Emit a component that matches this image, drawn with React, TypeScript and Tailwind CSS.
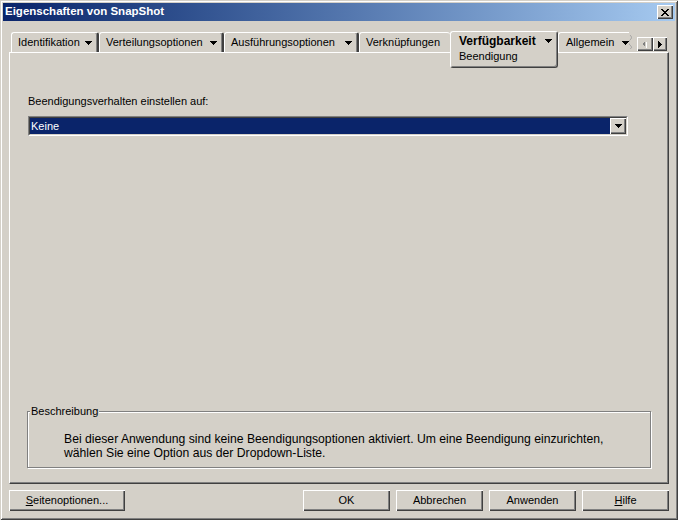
import React from "react";

const raised =
  "shadow-[inset_1px_1px_0_#ffffff,inset_-1px_-1px_0_#404040,inset_-2px_-2px_0_#808080]";

function Caret() {
  return (
    <svg width="7" height="4" viewBox="0 0 7 4" shapeRendering="crispEdges" className="shrink-0">
      <path d="M0 0h7v1h-1v1h-1v1h-1v1h-1v-1h-1v-1h-1v-1h-1z" fill="#000" />
    </svg>
  );
}

const tabs = [
  { label: "Identifikation", width: "w-[88px]", edge: true },
  { label: "Verteilungsoptionen", width: "w-[125px]", edge: true },
  { label: "Ausführungsoptionen", width: "w-[135px]", edge: true },
  { label: "Verknüpfungen", width: "w-[91px]", edge: false, noArrow: true },
];

function Tab({ label, width, edge, noArrow }: { label: string; width: string; edge: boolean; noArrow?: boolean }) {
  return (
    <div
      className={`${width} h-[20px] shrink-0 flex items-center pl-[6px] pr-[5px] border-l border-t border-white rounded-t-[3px] ${
        edge ? "border-r-2 border-r-[#404040] shadow-[inset_-1px_0_0_#808080]" : ""
      }`}
    >
      <span className="whitespace-nowrap">{label}</span>
      {!noArrow && (
        <span className="ml-auto">
          <Caret />
        </span>
      )}
    </div>
  );
}

function Button({ children, width = "w-[87px]" }: { children: React.ReactNode; width?: string }) {
  return (
    <button className={`${width} h-[21px] flex items-center justify-center bg-[#d4d0c8] ${raised}`}>
      {children}
    </button>
  );
}

export default function App() {
  return (
    <div
      className="w-[678px] h-[520px] bg-[#d4d0c8] p-[3px] flex flex-col text-[11px] text-black font-['Liberation_Sans',Arial,sans-serif] shadow-[inset_1px_1px_0_#d4d0c8,inset_-1px_-1px_0_#404040,inset_2px_2px_0_#ffffff,inset_-2px_-2px_0_#808080] overflow-hidden select-none"
    >
      {/* Title bar */}
      <div className="h-[18px] shrink-0 flex items-center justify-between pl-[2px] pr-[2px] bg-gradient-to-r from-[#0a246a] to-[#a6caf0]">
        <span className="text-white font-bold text-[11.5px] leading-none">Eigenschaften von SnapShot</span>
        <button className={`w-[16px] h-[14px] flex items-center justify-center bg-[#d4d0c8] ${raised}`}>
          <svg width="8" height="7" viewBox="0 0 8 7" shapeRendering="crispEdges">
            <path
              d="M0 0h2v1h1v1h2v-1h1v-1h2v1h-1v1h-1v1h-1v1h1v1h1v1h1v1h-2v-1h-1v-1h-2v1h-1v1h-2v-1h1v-1h1v-1h1v-1h-1v-1h-1v-1h-1z"
              fill="#000"
            />
          </svg>
        </button>
      </div>

      <div className="flex-1 flex flex-col px-[6px] pt-[10px]">
        {/* Tab strip */}
        <div className="relative z-10 h-[21px] shrink-0 flex items-start pl-[2px] pr-[2px]">
          <div className="flex items-end h-[21px]">
            {tabs.map((t) => (
              <Tab key={t.label} {...t} />
            ))}
          </div>

          {/* Selected tab with sub-page */}
          <div className="w-[108px] h-[37px] shrink-0 bg-[#d4d0c8] border-l border-t border-white rounded-[3px] border-r border-b border-r-[#404040] border-b-[#404040] shadow-[inset_-1px_-1px_0_#808080] pl-[8px] pr-[5px] pt-[2px]">
            <div className="flex items-center h-[14px]">
              <span className="font-bold text-[12px]">Verfügbarkeit</span>
              <span className="ml-auto">
                <Caret />
              </span>
            </div>
            <div className="h-[14px] mt-[1px] flex items-center">Beendigung</div>
          </div>

          {/* Clipped tab */}
          <div className="self-end w-[71px] h-[20px] overflow-hidden shrink-0">
            <div className="w-[90px] h-[20px] flex items-center pl-[7px] border-l border-t border-white rounded-t-[3px]">
              <span>Allgemein</span>
              <span className="ml-[8px]">
                <Caret />
              </span>
            </div>
          </div>
          <svg width="4" height="14" viewBox="0 0 4 14" className="self-end mb-[3px] shrink-0">
            <path d="M1 0c2 2 2 3 0 5c-2 2-2 3 0 5c2 2 2 3 0 4" stroke="#a0a0a0" fill="none" strokeWidth="1" />
          </svg>

          <div className="flex-1" />

          <div className="flex mt-[6px]">
            <div className={`w-[16px] h-[14px] flex items-center justify-center bg-[#d4d0c8] ${raised}`}>
              <svg width="4" height="7" viewBox="0 0 5 8" shapeRendering="crispEdges">
                <path d="M4 1v7h1v-7z" fill="#ffffff" />
                <path d="M3 0v7h-1v-1h-1v-1h-1v-3h1v-1h1v-1z" fill="#808080" />
              </svg>
            </div>
            <div className={`w-[14px] h-[14px] flex items-center justify-center bg-[#d4d0c8] ${raised}`}>
              <svg width="4" height="7" viewBox="0 0 4 7" shapeRendering="crispEdges">
                <path d="M0 0v7h1v-1h1v-1h1v-1h1v-1h-1v-1h-1v-1h-1v-1z" fill="#000" />
              </svg>
            </div>
          </div>
        </div>

        {/* Tab panel */}
        <div className="h-[432px] shrink-0 flex flex-col border-l border-t border-white border-r border-b border-r-[#404040] border-b-[#404040] shadow-[inset_-1px_-1px_0_#808080]">
          <div className="pt-[42px] pl-[18px]">
            <div className="leading-[13px]">Beendigungsverhalten einstellen auf:</div>
            <div className="mt-[8px] w-[600px] h-[20px] flex border-t border-l border-[#808080] border-r border-b border-r-white border-b-white">
              <div className="flex-1 flex border-t border-l border-[#404040] border-r border-b border-r-[#d4d0c8] border-b-[#d4d0c8]">
                <div className="flex-1 bg-[#0a246a] text-white flex items-center pl-[1px]">Keine</div>
                <div className={`w-[16px] flex items-center justify-center bg-[#d4d0c8] ${raised}`}>
                  <Caret />
                </div>
              </div>
            </div>
          </div>

          {/* Beschreibung group */}
          <div className="mt-auto mx-[17px] mb-[15px] h-[57px] relative border border-[#808080] shadow-[1px_1px_0_#ffffff,inset_1px_1px_0_#ffffff]">
            <span className="absolute left-[2px] -top-[7px] bg-[#d4d0c8] px-[1px] leading-[13px]">Beschreibung</span>
            <div className="pt-[20px] pl-[36px] leading-[14px] text-[12.2px]">
              Bei dieser Anwendung sind keine Beendigungsoptionen aktiviert. Um eine Beendigung einzurichten,
              <br />
              wählen Sie eine Option aus der Dropdown-Liste.
            </div>
          </div>
        </div>

        {/* Buttons */}
        <div className="mt-[6px] flex gap-[6px]">
          <Button width="w-[116px]">
            <span>
              <span className="underline">S</span>eitenoptionen...
            </span>
          </Button>
          <div className="flex-1" />
          <Button>OK</Button>
          <Button>Abbrechen</Button>
          <Button>Anwenden</Button>
          <Button>
            <span>
              <span className="underline">H</span>ilfe
            </span>
          </Button>
        </div>
      </div>
    </div>
  );
}
